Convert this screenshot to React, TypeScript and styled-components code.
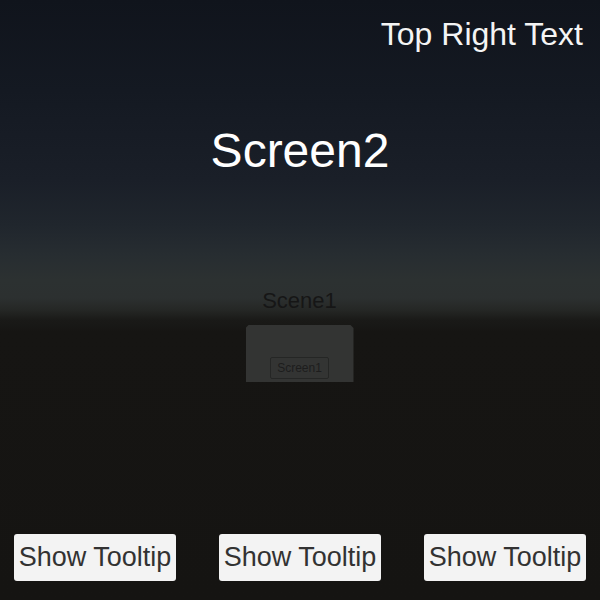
import React from "react";
import styled, { createGlobalStyle } from "styled-components";

const GlobalStyle = createGlobalStyle`
  html, body { margin: 0; padding: 0; }
  body { font-family: "Liberation Sans", Arial, sans-serif; }
`;

const Stage = styled.div`
  width: 600px;
  height: 600px;
  display: flex;
  flex-direction: column;
  overflow: hidden;
  background: linear-gradient(
    to bottom,
    #10141c 0px,
    #141922 90px,
    #1a1f28 180px,
    #20262d 225px,
    #272d31 255px,
    #2c3131 280px,
    #2c3030 298px,
    #252725 310px,
    #1a1a18 320px,
    #161513 332px,
    #151412 600px
  );
`;

const TopBar = styled.div`
  display: flex;
  justify-content: flex-end;
  padding: 18px 17px 0 0;
`;

const CornerText = styled.div`
  font-size: 32px;
  line-height: 1;
  color: #f4f4f4;
`;

const Title = styled.h1`
  margin: 77px 0 0;
  font-size: 48px;
  font-weight: normal;
  line-height: 1;
  color: #ffffff;
  text-align: center;
`;

const World = styled.div`
  display: flex;
  flex-direction: column;
  align-items: center;
  margin-top: 115px;
  padding-right: 1px;
`;

const SceneLabel = styled.div`
  font-size: 22px;
  line-height: 1;
  color: #161616;
`;

const Panel = styled.div`
  margin-top: 13px;
  width: 108px;
  height: 57px;
  background: #333433;
  clip-path: polygon(3px 0, calc(100% - 3px) 0, 100% 3px, 100% 100%, 0 100%, 0 3px);
  display: flex;
  justify-content: center;
  align-items: flex-end;
  padding-bottom: 3px;
  box-sizing: border-box;
`;

const PanelButton = styled.div`
  width: 59px;
  height: 22px;
  box-sizing: border-box;
  border: 1px solid #252625;
  border-radius: 2px;
  display: flex;
  align-items: center;
  justify-content: center;
  font-size: 12px;
  color: #1d1d1d;
`;

const Spacer = styled.div`
  flex: 1;
`;

const Footer = styled.div`
  display: flex;
  justify-content: space-between;
  padding: 0 14px 19px;
`;

const TipButton = styled.button`
  width: 162px;
  height: 47px;
  border: none;
  border-radius: 3px;
  background: #f3f3f3;
  color: #323232;
  font-family: "Liberation Sans", Arial, sans-serif;
  font-size: 27px;
  line-height: 1;
  padding: 0;
  display: flex;
  align-items: center;
  justify-content: center;
`;

export default function App() {
  return (
    <>
      <GlobalStyle />
      <Stage>
        <TopBar>
          <CornerText>Top Right Text</CornerText>
        </TopBar>
        <Title>Screen2</Title>
        <World>
          <SceneLabel>Scene1</SceneLabel>
          <Panel>
            <PanelButton>Screen1</PanelButton>
          </Panel>
        </World>
        <Spacer />
        <Footer>
          <TipButton>Show Tooltip</TipButton>
          <TipButton>Show Tooltip</TipButton>
          <TipButton>Show Tooltip</TipButton>
        </Footer>
      </Stage>
    </>
  );
}
